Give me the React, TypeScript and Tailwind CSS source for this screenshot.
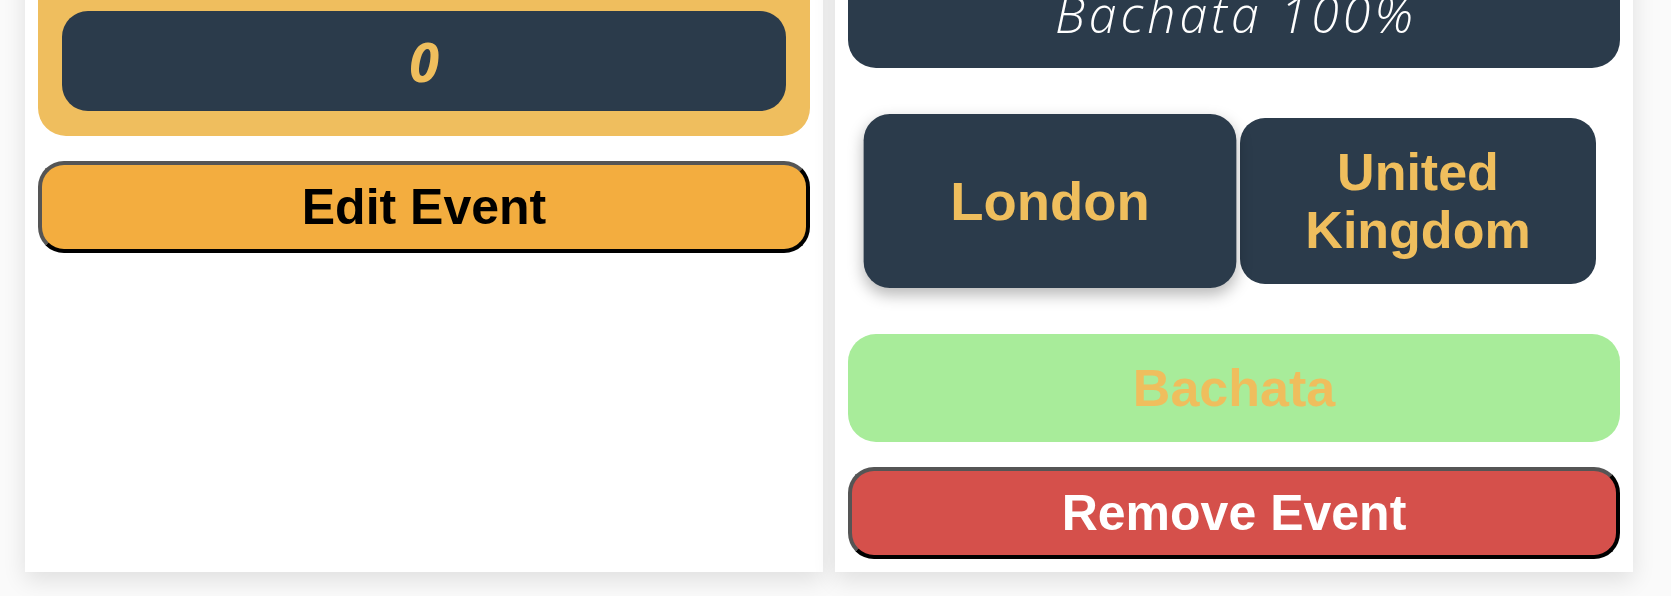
import React from "react";

const sans = "font-['Liberation_Sans',Arial,sans-serif]";

const EventCard: React.FC<{ children: React.ReactNode }> = ({ children }) => (
  <section className="w-[798px] shrink-0 bg-white px-[13px] pt-[13px] pb-[13px] shadow-[0_8px_22px_rgba(0,0,0,0.11)] flex flex-col">
    {children}
  </section>
);

const PlaceTile: React.FC<{ label: React.ReactNode; hovered?: boolean }> = ({ label, hovered }) => (
  <div
    className={`w-[356px] h-[166px] rounded-[25px] bg-[#2b3b4b] flex items-center justify-center text-center text-[#efbe5d] text-[52px] leading-[1.12] font-bold ${sans} ${
      hovered ? "scale-[1.047] shadow-[0_6px_14px_rgba(0,0,0,0.28)]" : ""
    }`}
  >
    {label}
  </div>
);

export default function App() {
  return (
    <div className="h-[596px] overflow-hidden bg-[#fafafa]">
      <div className="-mt-[60px] flex gap-[12px] pl-[25px]">
        {/* left: stats + edit */}
        <EventCard>
          <div className="rounded-[28px] bg-[#efbe5e] px-6 pt-[58px] pb-[25px]">
            <div className="h-[100px] rounded-[26px] bg-[#2b3b4b] flex items-center justify-center">
              <span className="text-[54px] leading-none font-bold italic text-[#efbe5d] font-['Open_Sans',sans-serif]">
                0
              </span>
            </div>
          </div>
          <button
            className={`mt-[25px] h-[92px] w-full rounded-[26px] border-4 border-t-[#555] border-l-[#555] border-r-black border-b-black bg-[#f3ad3f] text-black text-[50px] leading-none font-bold ${sans}`}
          >
            Edit Event
          </button>
        </EventCard>

        {/* right: details + remove */}
        <EventCard>
          <div className="h-[115px] rounded-[28px] bg-[#2b3b4b] flex items-end justify-center pb-[29px] pl-[4px]">
            <span className="text-[50px] leading-none italic font-light tracking-[4px] text-white font-['Open_Sans',sans-serif]">
              Bachata 100%
            </span>
          </div>

          <div className="mt-[50px] flex gap-[12px] px-6">
            <PlaceTile label="London" hovered />
            <PlaceTile
              label={
                <>
                  United
                  <br />
                  Kingdom
                </>
              }
            />
          </div>

          <div
            className={`mt-[50px] h-[108px] rounded-[28px] bg-[#a8ec9a] flex items-center justify-center text-[#efbe5d] text-[52px] font-bold ${sans}`}
          >
            Bachata
          </div>

          <button
            className={`mt-[25px] h-[92px] w-full rounded-[26px] border-4 border-t-[#555] border-l-[#555] border-r-black border-b-black bg-[#d5504b] text-white text-[50px] leading-none font-bold ${sans}`}
          >
            Remove Event
          </button>
        </EventCard>
      </div>
    </div>
  );
}
